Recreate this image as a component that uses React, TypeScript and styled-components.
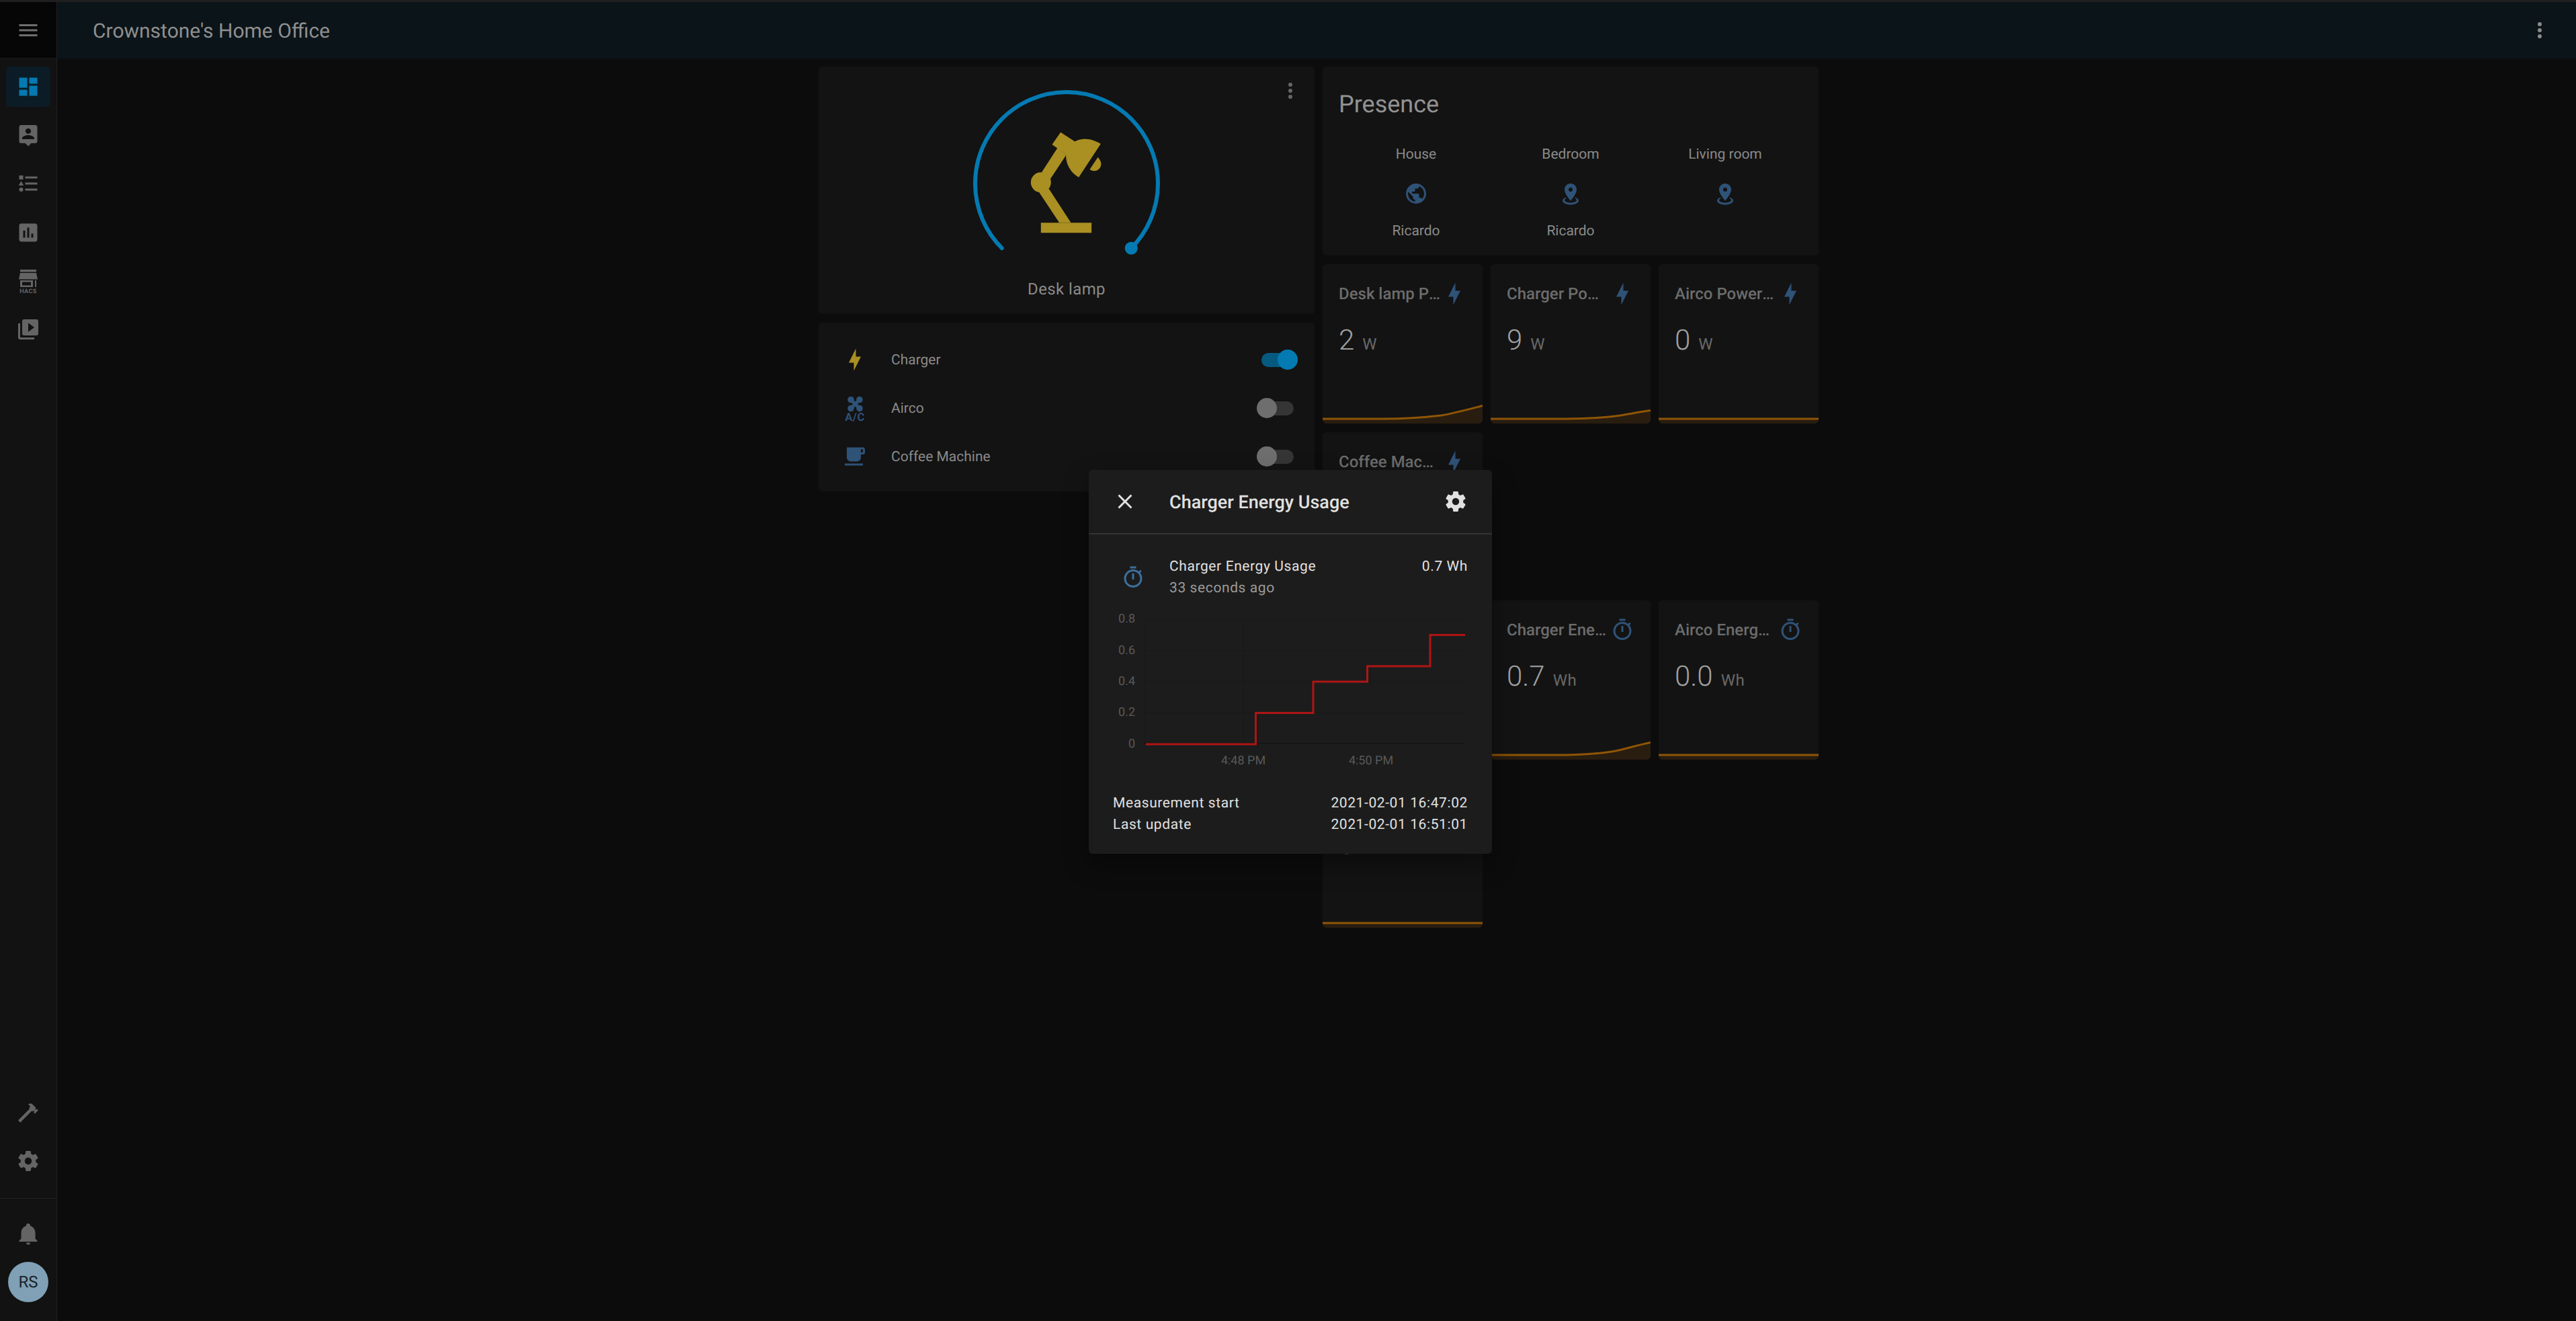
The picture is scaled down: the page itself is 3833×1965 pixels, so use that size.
import React from "react";
import styled, { createGlobalStyle } from "styled-components";

const mdi = {
  menu: "M3,6H21V8H3V6M3,11H21V13H3V11M3,16H21V18H3V16Z",
  dashboard: "M13,3V9H21V3M13,21H21V11H13M3,21H11V15H3M3,13H11V3H3V13Z",
  accountLocation:
    "M18,16H6V15.1C6,13.1 10,12 12,12C14,12 18,13.1 18,15.1M12,5.3C13.5,5.3 14.8,6.5 14.8,8C14.8,9.5 13.5,10.7 12,10.7C10.5,10.7 9.2,9.5 9.2,8C9.2,6.5 10.5,5.3 12,5.3M19,2H5C3.89,2 3,2.89 3,4V18A2,2 0 0,0 5,20H9L12,23L15,20H19A2,2 0 0,0 21,18V4C21,2.89 20.1,2 19,2Z",
  listType:
    "M5,9.5L7.5,14H2.5L5,9.5M3,4H7V8H3V4M5,20A2,2 0 0,0 7,18A2,2 0 0,0 5,16A2,2 0 0,0 3,18A2,2 0 0,0 5,20M9,5V7H21V5H9M9,19H21V17H9V19M9,13H21V11H9V13Z",
  chartBox:
    "M9 17H7V10H9V17M13 17H11V7H13V17M17 17H15V13H17V17M19 3H5C3.9 3 3 3.9 3 5V19C3 20.1 3.9 21 5 21H19C20.1 21 21 20.1 21 19V5C21 3.9 20.1 3 19 3Z",
  playBox:
    "M4,6H2V20A2,2 0 0,0 4,22H18V20H4M20,2H8A2,2 0 0,0 6,4V16A2,2 0 0,0 8,18H20A2,2 0 0,0 22,16V4A2,2 0 0,0 20,2M12,14.5V5.5L18,10L12,14.5Z",
  hammer:
    "M2 19.63L13.43 8.2L12.72 7.5L14.14 6.07L12 3.89C13.2 2.7 15.09 2.7 16.27 3.89L19.87 7.5L18.45 8.91H21.29L22 9.62L18.45 13.21L17.74 12.5V9.62L16.27 11.04L15.56 10.33L4.13 21.76L2 19.63Z",
  cog: "M12,15.5A3.5,3.5 0 0,1 8.5,12A3.5,3.5 0 0,1 12,8.5A3.5,3.5 0 0,1 15.5,12A3.5,3.5 0 0,1 12,15.5M19.43,12.97C19.47,12.65 19.5,12.33 19.5,12C19.5,11.67 19.47,11.34 19.43,11L21.54,9.37C21.73,9.22 21.78,8.95 21.66,8.73L19.66,5.27C19.54,5.05 19.27,4.96 19.05,5.05L16.56,6.05C16.04,5.66 15.5,5.32 14.87,5.07L14.5,2.42C14.46,2.18 14.25,2 14,2H10C9.75,2 9.54,2.18 9.5,2.42L9.13,5.07C8.5,5.32 7.96,5.66 7.44,6.05L4.95,5.05C4.73,4.96 4.46,5.05 4.34,5.27L2.34,8.73C2.21,8.95 2.27,9.22 2.46,9.37L4.57,11C4.53,11.34 4.5,11.67 4.5,12C4.5,12.33 4.53,12.65 4.57,12.97L2.46,14.63C2.27,14.78 2.21,15.05 2.34,15.27L4.34,18.73C4.46,18.95 4.73,19.03 4.95,18.95L7.44,17.94C7.96,18.34 8.5,18.68 9.13,18.93L9.5,21.58C9.54,21.82 9.75,22 10,22H14C14.25,22 14.46,21.82 14.5,21.58L14.87,18.93C15.5,18.67 16.04,18.34 16.56,17.94L19.05,18.95C19.27,19.03 19.54,18.95 19.66,18.73L21.66,15.27C21.78,15.05 21.73,14.78 21.54,14.63L19.43,12.97Z",
  bell: "M21,19V20H3V19L5,17V11C5,7.9 7.03,5.17 10,4.29C10,4.19 10,4.1 10,4A2,2 0 0,1 12,2A2,2 0 0,1 14,4C14,4.1 14,4.19 14,4.29C16.97,5.17 19,7.9 19,11V17L21,19M14,21A2,2 0 0,1 12,23A2,2 0 0,1 10,21",
  close:
    "M19,6.41L17.59,5L12,10.59L6.41,5L5,6.41L10.59,12L5,17.59L6.41,19L12,13.41L17.59,19L19,17.59L13.41,12L19,6.41Z",
  dots: "M12,16A2,2 0 0,1 14,18A2,2 0 0,1 12,20A2,2 0 0,1 10,18A2,2 0 0,1 12,16M12,10A2,2 0 0,1 14,12A2,2 0 0,1 12,14A2,2 0 0,1 10,12A2,2 0 0,1 12,10M12,4A2,2 0 0,1 14,6A2,2 0 0,1 12,8A2,2 0 0,1 10,6A2,2 0 0,1 12,4Z",
  timer:
    "M12,20A7,7 0 0,1 5,13A7,7 0 0,1 12,6A7,7 0 0,1 19,13A7,7 0 0,1 12,20M19.03,7.39L20.45,5.97C20,5.46 19.55,5 19.04,4.56L17.62,6C16.07,4.74 14.12,4 12,4A9,9 0 0,0 3,13A9,9 0 0,0 12,22C17,22 21,17.97 21,13C21,10.88 20.26,8.93 19.03,7.39M11,14H13V8H11M15,1H9V3H15V1Z",
  earth:
    "M17.9,17.39C17.64,16.59 16.89,16 16,16H15V13A1,1 0 0,0 14,12H8V10H10A1,1 0 0,0 11,9V7H13A2,2 0 0,0 15,5V4.59C17.93,5.77 20,8.64 20,12C20,14.08 19.2,15.97 17.9,17.39M11,19.93C7.05,19.44 4,16.08 4,12C4,11.38 4.08,10.78 4.21,10.21L9,15V16A2,2 0 0,0 11,18M12,2A10,10 0 0,0 2,12A10,10 0 0,0 12,22A10,10 0 0,0 22,12A10,10 0 0,0 12,2Z",
  markerRadius:
    "M12,2C15.31,2 18,4.66 18,7.95C18,12.41 12,19 12,19C12,19 6,12.41 6,7.95C6,4.66 8.69,2 12,2M12,6A2,2 0 0,0 10,8A2,2 0 0,0 12,10A2,2 0 0,0 14,8A2,2 0 0,0 12,6M20,19C20,21.21 16.42,23 12,23C7.58,23 4,21.21 4,19C4,17.71 5.22,16.56 7.11,15.83L7.75,16.74C6.67,17.19 6,17.81 6,18.5C6,19.88 8.69,21 12,21C15.31,21 18,19.88 18,18.5C18,17.81 17.33,17.19 16.25,16.74L16.89,15.83C18.78,16.56 20,17.71 20,19Z",
  bolt: "M11 15H6L13 1V9H18L11 23V15Z",
  coffee:
    "M2,21H20V19H2M20,8H18V5H20M20,3H4V13A4,4 0 0,0 8,17H14A4,4 0 0,0 18,13V10H20A2,2 0 0,0 22,8V5C22,3.89 21.1,3 20,3Z",
};

const GlobalStyle = createGlobalStyle`
  html, body {
    margin: 0;
    background: #0c0c0c;
    font-family: Roboto, "Noto Sans", sans-serif;
    text-rendering: geometricPrecision;
  }
  * {
    box-sizing: border-box;
  }
`;

const Page = styled.div`
  position: relative;
  width: 3833px;
  height: 1965px;
  overflow: hidden;
  display: flex;
  flex-direction: column;
  background: #0c0c0c;
`;

const TopStrip = styled.div`
  height: 3px;
  flex: none;
  background: #1f1f1f;
`;

const Shell = styled.div`
  flex: 1;
  display: flex;
  min-height: 0;
`;

const Sidebar = styled.aside`
  width: 85px;
  flex: none;
  display: flex;
  flex-direction: column;
  background: #121212;
  border-right: 1px solid #202020;
`;

const MenuCell = styled.div`
  height: 84px;
  flex: none;
  display: flex;
  align-items: center;
  justify-content: center;
  background: #060606;
  border-bottom: 1px solid #1a1a1a;
`;

const NavList = styled.nav`
  flex: 1;
  display: flex;
  flex-direction: column;
  gap: 0.2px;
  padding-top: 6px;
`;

const NavItem = styled.div<{ $active?: boolean; $muted?: boolean }>`
  height: 60px;
  margin: 6px 9px;
  flex: none;
  display: flex;
  align-items: center;
  justify-content: center;
  border-radius: 6px;
  color: ${(p) => (p.$active ? "#047ab2" : p.$muted ? "#6e6e6e" : "#646464")};
  background: ${(p) => (p.$active ? "#0b1c26" : "transparent")};
`;

const SidebarDivider = styled.div`
  height: 1px;
  flex: none;
  margin: 19px 0 16px;
  background: #222;
`;

const Avatar = styled.div`
  width: 60px;
  height: 60px;
  flex: none;
  margin: 6px 0 28px 12px;
  display: flex;
  align-items: center;
  justify-content: center;
  border-radius: 50%;
  background: #7fa0b5;
  color: #1a2228;
  font-size: 24px;
`;

const Content = styled.div`
  flex: 1;
  min-width: 0;
  display: flex;
  flex-direction: column;
`;

const TopBar = styled.header`
  height: 84px;
  flex: none;
  display: flex;
  align-items: center;
  justify-content: space-between;
  padding: 0 36px 0 53px;
  background: #0b1419;
  color: #8f8f8f;
  font-size: 30px;
`;

const TopBarTitle = styled.div`
  margin-top: 2px;
`;

const TopBarDots = styled.div`
  display: flex;
  color: #8c8c8c;
`;

const Board = styled.main`
  flex: 1;
  display: flex;
  justify-content: center;
  align-items: flex-start;
  gap: 12px;
  padding: 12px 0 0 6px;
`;

const Column = styled.div`
  width: 738px;
  flex: none;
  display: flex;
  flex-direction: column;
  gap: 13px;
`;

const Card = styled.section`
  position: relative;
  background: #131313;
  border-radius: 6px;
  overflow: hidden;
`;

const LampCard = styled(Card)`
  height: 368px;
  padding-top: 25px;
  display: flex;
  flex-direction: column;
  align-items: center;
`;

const LampMenu = styled.div`
  position: absolute;
  top: 18px;
  right: 18px;
  display: flex;
  color: #666;
`;

const LampName = styled.div`
  margin-top: 28px;
  line-height: 36px;
  font-size: 24px;
  letter-spacing: 0.4px;
  color: #8a8a8a;
`;

const SwitchCard = styled(Card)`
  height: 251px;
  padding: 19px 31px 16px 36px;
`;

const SwitchRow = styled.div`
  height: 72px;
  display: flex;
  align-items: center;
`;

const RowIcon = styled.div<{ $color: string }>`
  width: 36px;
  height: 36px;
  flex: none;
  display: flex;
  color: ${(p) => p.$color};
`;

const RowName = styled.div`
  flex: 1;
  margin: 2px 0 0 36px;
  font-size: 21px;
  color: #8a8a8a;
`;

const Track = styled.div<{ $on: boolean }>`
  position: relative;
  width: 48px;
  height: 21px;
  flex: none;
  border-radius: 11px;
  background: ${(p) => (p.$on ? "#065a80" : "#353535")};
`;

const Thumb = styled.div<{ $on: boolean }>`
  position: absolute;
  top: -5px;
  left: ${(p) => (p.$on ? "24px" : "-7px")};
  width: 30px;
  height: 30px;
  border-radius: 50%;
  background: ${(p) => (p.$on ? "#047ab2" : "#6e6e6e")};
`;

const PresenceCard = styled(Card)`
  height: 281px;
  padding: 32px 24px 0 24px;
`;

const PresenceTitle = styled.h2`
  margin: 0;
  line-height: 48px;
  font-size: 36px;
  font-weight: 400;
  color: #929292;
`;

const PresenceGrid = styled.div`
  margin-top: 35px;
  display: grid;
  grid-template-columns: repeat(3, 230px);
`;

const PresenceColumn = styled.div`
  display: flex;
  flex-direction: column;
  align-items: center;
`;

const PresenceLabel = styled.div`
  height: 32px;
  line-height: 32px;
  font-size: 21px;
  color: #8a8a8a;
`;

const PresenceIcon = styled.div`
  margin: 24px 0 22px;
  display: flex;
  color: #2f5277;
`;

const SensorGrid = styled.div`
  display: grid;
  grid-template-columns: repeat(3, 238px);
  grid-auto-rows: 237px;
  gap: 13px 12px;
`;

const SensorCard = styled(Card)`
  display: flex;
  flex-direction: column;
`;

const SensorHeader = styled.div`
  height: 36px;
  margin-top: 26px;
  padding: 0 24px 0 24px;
  flex: none;
  display: flex;
  align-items: center;
`;

const SensorTitle = styled.div`
  flex: 1;
  min-width: 0;
  margin-right: 1.5px;
  overflow: hidden;
  white-space: nowrap;
  text-overflow: ellipsis;
  font-size: 24px;
  font-weight: 500;
  color: #6c6c6c;
`;

const SensorIcon = styled.div`
  flex: none;
  display: flex;
  color: #2f5277;
`;

const SensorValue = styled.div`
  margin-top: 27px;
  padding-left: 24px;
  line-height: 50px;
  font-size: 42px;
  font-weight: 300;
  color: #a0a0a0;
`;

const SensorUnit = styled.span`
  margin-left: 12px;
  font-size: 24px;
  font-weight: 400;
  letter-spacing: 0.5px;
  color: #686868;
`;

const SensorGraph = styled.svg`
  display: block;
  margin-top: auto;
  flex: none;
`;

const Dialog = styled.div`
  position: absolute;
  left: 1620px;
  top: 699px;
  width: 600px;
  height: 571px;
  border-radius: 6px;
  background: #1c1c1c;
  box-shadow: 0 16px 36px rgba(0, 0, 0, 0.4);
  color: #e1e1e1;
`;

const DialogHeader = styled.div`
  height: 96px;
  display: flex;
  align-items: center;
  padding: 0 36px;
  border-bottom: 2px solid #333;
`;

const DialogTitle = styled.div`
  flex: 1;
  margin: 2px 0 0 48px;
  font-size: 27px;
  font-weight: 500;
`;

const DialogIcon = styled.div`
  display: flex;
  color: #e1e1e1;
`;

const DialogBody = styled.div`
  padding: 33px 36px 0;
`;

const StateRow = styled.div`
  display: flex;
  align-items: center;
  font-size: 21px;
  letter-spacing: 0.6px;
  line-height: 31.5px;
`;

const StateIcon = styled.div`
  width: 36px;
  height: 36px;
  flex: none;
  margin: -2px 36px 0 12px;
  display: flex;
  color: #3c6e9c;
`;

const StateText = styled.div`
  flex: 1;
`;

const StateAgo = styled.div`
  color: #9b9b9b;
`;

const StateValue = styled.div`
  align-self: flex-start;
`;

const Chart = styled.svg`
  display: block;
  margin-top: 14px;
`;

const AttributeList = styled.div`
  margin-top: 30px;
`;

const AttributeRow = styled.div`
  display: flex;
  justify-content: space-between;
  font-size: 21px;
  letter-spacing: 0.6px;
  line-height: 31.5px;
`;

const Icon = ({ d, size = 36 }: { d: string; size?: number }) => (
  <svg width={size} height={size} viewBox="0 0 24 24" fill="currentColor">
    <path d={d} />
  </svg>
);

const HacsIcon = () => (
  <svg width="28" height="37" viewBox="0 -2 28 37" fill="currentColor">
    <rect x="2" y="0" width="24" height="3.5" />
    <path d="M2 5H26L28 14.5H0Z" />
    <path d="M2 16H21V26H2ZM5 18.5V23.5H18V18.5Z" fillRule="evenodd" />
    <rect x="24" y="16" width="2" height="10" />
    <text x="14" y="34.5" fontFamily="Roboto" fontWeight="700" fontSize="9" textAnchor="middle" letterSpacing="0.4">
      HACS
    </text>
  </svg>
);

const AirconIcon = () => (
  <svg width="36" height="40" viewBox="0 0 36 40" fill="currentColor">
    <g transform="translate(18.5 12)">
      <g stroke="currentColor" strokeWidth="5" strokeLinecap="round">
        <line x1="-6.5" y1="-6.5" x2="6.5" y2="6.5" />
        <line x1="6.5" y1="-6.5" x2="-6.5" y2="6.5" />
      </g>
      <circle cx="-6.5" cy="-6.5" r="4.8" />
      <circle cx="6.5" cy="-6.5" r="4.8" />
      <circle cx="-6.5" cy="6.5" r="4.8" />
      <circle cx="6.5" cy="6.5" r="4.8" />
    </g>
    <text x="18" y="37" fontFamily="Roboto" fontWeight="700" fontSize="16.5" textAnchor="middle" letterSpacing="0.5">
      A/C
    </text>
  </svg>
);

const LampIcon = ({ x, y }: { x: number; y: number }) => (
  <svg x={x} y={y} width="180" height="180" viewBox="0 0 540 540" fill="#aa8f22">
    <rect x="148" y="454" width="226" height="45" />
    <polygon points="140,318 184,303 282,454 230,454" />
    <circle cx="148" cy="274" r="45" />
    <polygon points="152,228 222,120 262,150 188,262" />
    <polygon points="236,50 305,95 262,150 198,105" />
    <path d="M415 102L317 251C285 235 258 195 260 150C262 110 300 80 345 80C372 80 395 90 415 102Z" />
    <path d="M402 162C420 180 424 205 400 220C388 226 375 222 366 216Z" />
  </svg>
);

const Gauge = () => (
  <svg width="300" height="260" viewBox="0 0 300 260">
    <path
      d="M53.8 245.2A136 136 0 1 1 246.2 245.2"
      fill="none"
      stroke="#047ab2"
      strokeWidth="6"
      strokeLinecap="round"
    />
    <circle cx="246.2" cy="245.2" r="9.5" fill="#047ab2" />
    <LampIcon x={62.5} y={56} />
  </svg>
);

const curves: Record<string, string> = {
  flat: "M0 33L238 33",
  lamp: "M0 33L90 33C120 33 150 31 176 28C190 26 205 22 238 13.5",
  charger: "M0 33L100 33C130 33 160 32 185 29C200 27 220 23 238 20.6",
  energy: "M0 33L100 33C135 33 160 31 180 28C195 26 215 19 238 14.5",
};

const Sparkline = ({ curve }: { curve: string }) => (
  <SensorGraph width="238" height="40" viewBox="0 0 238 40">
    <path d={`${curves[curve]}L238 40L0 40Z`} fill="#291d10" />
    <path d={curves[curve]} fill="none" stroke="#8f5505" strokeWidth="3" />
  </SensorGraph>
);

type Sensor = { name: string; value: string; unit: string; icon: string; curve: string };

const sensors: (Sensor | null)[] = [
  { name: "Desk lamp Power Usage", value: "2", unit: "W", icon: mdi.bolt, curve: "lamp" },
  { name: "Charger Power Usage", value: "9", unit: "W", icon: mdi.bolt, curve: "charger" },
  { name: "Airco Power Usage", value: "0", unit: "W", icon: mdi.bolt, curve: "flat" },
  { name: "Coffee Machine Power Usage", value: "0", unit: "W", icon: mdi.bolt, curve: "flat" },
  null,
  null,
  { name: "Desk lamp Energy Usage", value: "0.1", unit: "Wh", icon: mdi.timer, curve: "flat" },
  { name: "Charger Energy Usage", value: "0.7", unit: "Wh", icon: mdi.timer, curve: "energy" },
  { name: "Airco Energy Usage", value: "0.0", unit: "Wh", icon: mdi.timer, curve: "flat" },
  { name: "Coffee Machine Energy Usage", value: "0", unit: "Wh", icon: mdi.timer, curve: "flat" },
];

const switches = [
  { name: "Charger", on: true, color: "#aa8f22", icon: <Icon d={mdi.bolt} /> },
  { name: "Airco", on: false, color: "#2f5277", icon: <AirconIcon /> },
  { name: "Coffee Machine", on: false, color: "#2f5277", icon: <Icon d={mdi.coffee} /> },
];

const rooms = [
  { name: "House", icon: mdi.earth, who: "Ricardo" },
  { name: "Bedroom", icon: mdi.markerRadius, who: "Ricardo" },
  { name: "Living room", icon: mdi.markerRadius, who: "" },
];

const EnergyChart = () => {
  const grid = "#191919";
  const label = { fontFamily: "Roboto", fontSize: 18, fill: "#595959" };
  const rows: [string, number, number][] = [
    ["0.8", 921.5, 926],
    ["0.6", 968, 973],
    ["0.4", 1014, 1019],
    ["0.2", 1060, 1065],
    ["0", 1106, 1112],
  ];
  return (
    <Chart width="528" height="245" viewBox="1656 905 528 245">
      {rows.map(([text, y, base]) => (
        <g key={text}>
          <line x1="1702" x2="2180" y1={y} y2={y} stroke={text === "0" ? "#151515" : grid} strokeWidth={text === "0" ? 2 : 1} />
          <text x="1689" y={base} textAnchor="end" {...label}>
            {text}
          </text>
        </g>
      ))}
      <line x1="1703" x2="1703" y1="921" y2="1106" stroke={grid} />
      <line x1="1850" x2="1850" y1="921" y2="1106" stroke={grid} />
      <line x1="2040" x2="2040" y1="921" y2="1106" stroke={grid} />
      <path
        d="M1705 1107H1868.5V1060.5H1954V1014H2034.5V991H2128V944.5H2180"
        fill="none"
        stroke="#b01414"
        strokeWidth="3"
      />
      <text x="1850" y="1137" textAnchor="middle" {...label}>
        4:48 PM
      </text>
      <text x="2040" y="1137" textAnchor="middle" {...label}>
        4:50 PM
      </text>
    </Chart>
  );
};

export default function App() {
  return (
    <Page>
      <GlobalStyle />
      <TopStrip />
      <Shell>
        <Sidebar>
          <MenuCell>
            <NavItem $muted>
              <Icon d={mdi.menu} />
            </NavItem>
          </MenuCell>
          <NavList>
            <NavItem $active>
              <Icon d={mdi.dashboard} />
            </NavItem>
            <NavItem>
              <Icon d={mdi.accountLocation} />
            </NavItem>
            <NavItem>
              <Icon d={mdi.listType} />
            </NavItem>
            <NavItem>
              <Icon d={mdi.chartBox} />
            </NavItem>
            <NavItem>
              <HacsIcon />
            </NavItem>
            <NavItem>
              <Icon d={mdi.playBox} />
            </NavItem>
          </NavList>
          <NavItem>
            <Icon d={mdi.hammer} />
          </NavItem>
          <NavItem>
            <Icon d={mdi.cog} />
          </NavItem>
          <SidebarDivider />
          <NavItem>
            <Icon d={mdi.bell} />
          </NavItem>
          <Avatar>RS</Avatar>
        </Sidebar>
        <Content>
          <TopBar>
            <TopBarTitle>Crownstone's Home Office</TopBarTitle>
            <TopBarDots>
              <Icon d={mdi.dots} />
            </TopBarDots>
          </TopBar>
          <Board>
            <Column>
              <LampCard>
                <LampMenu>
                  <Icon d={mdi.dots} />
                </LampMenu>
                <Gauge />
                <LampName>Desk lamp</LampName>
              </LampCard>
              <SwitchCard>
                {switches.map((s) => (
                  <SwitchRow key={s.name}>
                    <RowIcon $color={s.color}>{s.icon}</RowIcon>
                    <RowName>{s.name}</RowName>
                    <Track $on={s.on}>
                      <Thumb $on={s.on} />
                    </Track>
                  </SwitchRow>
                ))}
              </SwitchCard>
            </Column>
            <Column>
              <PresenceCard>
                <PresenceTitle>Presence</PresenceTitle>
                <PresenceGrid>
                  {rooms.map((r) => (
                    <PresenceColumn key={r.name}>
                      <PresenceLabel>{r.name}</PresenceLabel>
                      <PresenceIcon>
                        <Icon d={r.icon} />
                      </PresenceIcon>
                      <PresenceLabel>{r.who}</PresenceLabel>
                    </PresenceColumn>
                  ))}
                </PresenceGrid>
              </PresenceCard>
              <SensorGrid>
                {sensors.map((s, i) =>
                  s ? (
                    <SensorCard key={s.name}>
                      <SensorHeader>
                        <SensorTitle>{s.name}</SensorTitle>
                        <SensorIcon>
                          <Icon d={s.icon} />
                        </SensorIcon>
                      </SensorHeader>
                      <SensorValue>
                        {s.value}
                        <SensorUnit>{s.unit}</SensorUnit>
                      </SensorValue>
                      <Sparkline curve={s.curve} />
                    </SensorCard>
                  ) : (
                    <div key={i} />
                  )
                )}
              </SensorGrid>
            </Column>
          </Board>
        </Content>
      </Shell>
      <Dialog>
        <DialogHeader>
          <DialogIcon>
            <Icon d={mdi.close} />
          </DialogIcon>
          <DialogTitle>Charger Energy Usage</DialogTitle>
          <DialogIcon>
            <Icon d={mdi.cog} />
          </DialogIcon>
        </DialogHeader>
        <DialogBody>
          <StateRow>
            <StateIcon>
              <Icon d={mdi.timer} />
            </StateIcon>
            <StateText>
              <div>Charger Energy Usage</div>
              <StateAgo>33 seconds ago</StateAgo>
            </StateText>
            <StateValue>0.7 Wh</StateValue>
          </StateRow>
          <EnergyChart />
          <AttributeList>
            <AttributeRow>
              <span>Measurement start</span>
              <span>2021-02-01 16:47:02</span>
            </AttributeRow>
            <AttributeRow>
              <span>Last update</span>
              <span>2021-02-01 16:51:01</span>
            </AttributeRow>
          </AttributeList>
        </DialogBody>
      </Dialog>
    </Page>
  );
}
